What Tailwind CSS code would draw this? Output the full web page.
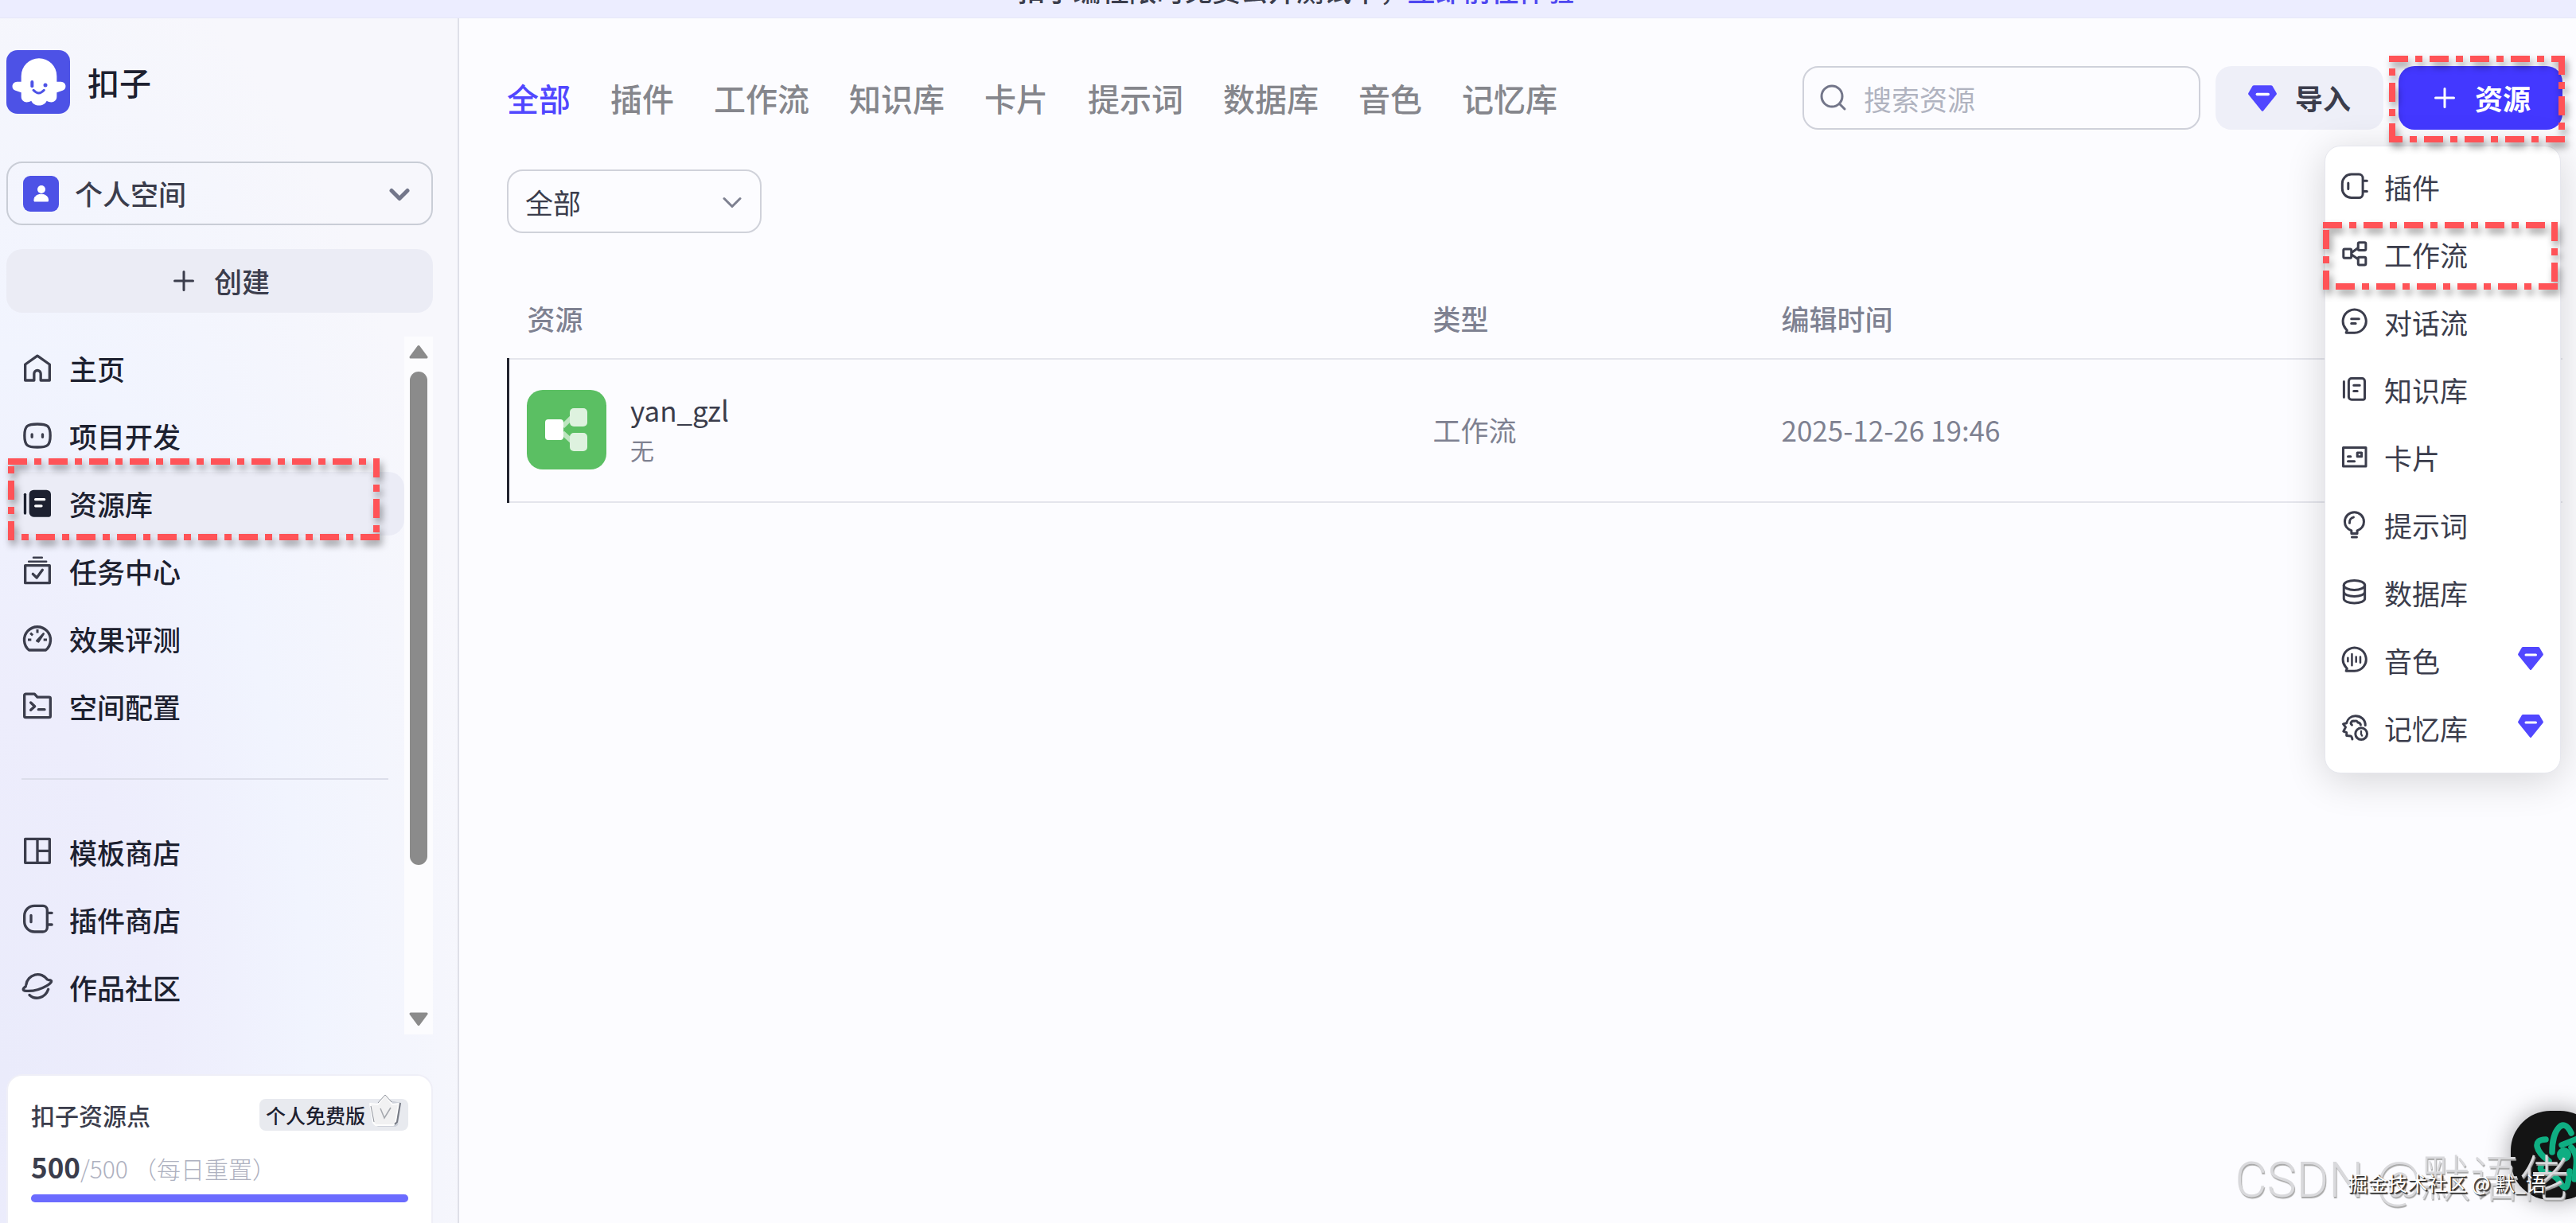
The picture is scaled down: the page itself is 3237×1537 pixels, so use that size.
<!DOCTYPE html>
<html lang="zh-CN">
<head>
  <meta charset="UTF-8" />
  <meta name="viewport" content="width=device-width, initial-scale=1.0" />
  <title>扣子 - 资源库</title>
  <script src="https://cdn.jsdelivr.net/npm/@tailwindcss/browser@4"></script>
</head>
<body class="relative h-screen overflow-hidden flex flex-col bg-[#fcfcff] font-['Noto_Sans_CJK_SC',sans-serif] text-[35px] leading-[50px] text-[#3b3d4c]">

  <!-- Shared icons -->
  <svg class="hidden" aria-hidden="true">
    <symbol id="i-plugin" viewBox="0 0 24 24">
      <path d="M9.8 1.4h6.4a3.2 3.2 0 0 1 3.2 3.2v13.2a3.2 3.2 0 0 1-3.2 3.2H9.8a7.6 7.6 0 0 1-7.6-7.6V9a7.6 7.6 0 0 1 7.6-7.6zM7.2 8.6v5M19.6 6.8h3.3M19.6 15.6h3.3" />
    </symbol>
    <symbol id="i-gem" viewBox="0 0 32 29">
      <path d="M6.5 0h19a2 2 0 0 1 1.6.8l4.5 7.6a2 2 0 0 1-.1 2.2L17 28.4a1.3 1.3 0 0 1-2 0L.5 10.6a2 2 0 0 1-.1-2.2L4.900.8A2 2 0 0 1 6.500 0z" fill="#5147ff" />
      <path d="M10 10h12.500" stroke="#fff" stroke-width="3" stroke-linecap="round" />
    </symbol>
    <symbol id="i-plus" viewBox="0 0 36 36">
      <path d="M18 6.500v23M6.500 18h23" stroke-width="3" stroke-linecap="round" />
    </symbol>
    <symbol id="i-bubble" viewBox="0 0 24 24">
      <path d="M5.400 20.800h7.100a9.700 9.700 0 1 0-7.500-3.500l1.200 1.500z" />
    </symbol>
  </svg>

  <!-- Notice bar -->
  <div class="h-[23px] shrink-0 overflow-hidden flex items-end justify-center bg-[#ecedff] border-b border-[#e6e7f8] pl-5 pb-2.5 font-medium">
    <p class="whitespace-nowrap">扣子编程限时免费公开测试中，<a href="#" class="text-[#4e47f0]">立即前往体验</a></p>
  </div>

  <div class="flex flex-1 min-h-0">

    <!-- Sidebar -->
    <aside class="w-[577px] shrink-0 flex flex-col border-r-2 border-[#dfe0e8] bg-[radial-gradient(ellipse_at_0%_88%,#eaebfb_0%,#ededfc_25%,#f1f4fe_48%,#f7f7fc_78%)] pt-10 pl-2 pr-[31px]">
      <a href="#" class="flex items-center gap-[22px] text-[40px] font-medium text-[#1d2130]">
        <svg class="size-20" viewBox="0 0 240 240" aria-hidden="true">
          <rect width="240" height="240" rx="42" fill="#4d52e6" />
          <path fill="#fff" d="M56 119V98a67 67 0 0 1 134 0v21h16c20 0 24 27 6 33l-22 8v15c0 22-22 26-38 16-8 23-50 23-58 0-16 10-38 6-38-16v-15l-22-8c-18-6-14-33 6-33z" />
          <rect x="91" y="114" width="12" height="28" rx="6" fill="#4d52e6" />
          <circle cx="147" cy="132" r="7.500" fill="#4d52e6" />
          <path d="M102 151q20 22 40 0" fill="none" stroke="#4d52e6" stroke-width="9" stroke-linecap="round" />
        </svg>
        <span>扣子</span>
      </a>

      <div class="relative mt-[60px]">
        <label for="space" class="sr-only">空间</label>
        <select id="space" class="w-full h-20 appearance-none rounded-[20px] border-2 border-[#c9cdd6] bg-transparent pl-[84px] font-medium">
          <option>个人空间</option>
        </select>
        <svg class="absolute left-[21px] top-[18px] size-[45px] pointer-events-none" viewBox="0 0 45 45" aria-hidden="true">
          <rect width="45" height="45" rx="9" fill="#4d52e6" />
          <circle cx="23" cy="17" r="5" fill="#fff" />
          <path d="M14 32v-2c0-9 17.500-9 17.500 0v2z" fill="#fff" stroke="#fff" stroke-linejoin="round" />
        </svg>
        <svg class="absolute right-[27px] top-[29px] size-[30px] pointer-events-none" viewBox="0 0 30 30" fill="none" stroke="#73768a" stroke-width="5" stroke-linecap="round" stroke-linejoin="round" aria-hidden="true">
          <path d="m5 7.500 10 10 10-10" />
        </svg>
      </div>

      <button type="button" class="mt-[30px] h-20 shrink-0 rounded-[20px] bg-[#ebecf5] flex items-center justify-center gap-5 font-medium">
        <svg class="size-9" stroke="currentColor" aria-hidden="true"><use href="#i-plus" /></svg>
        创建
      </button>

      <div class="mt-[30px] h-[877px] shrink-0 flex">
        <nav class="flex-1 font-medium text-[#1d2130]">
          <ul class="space-y-[5px]">
            <li>
              <a href="#" class="h-20 flex items-center gap-5 pl-[19px]">
                <svg class="size-10" viewBox="0 0 24 24" fill="none" stroke="#3b3d4c" stroke-width="2" stroke-linejoin="round" aria-hidden="true"><path d="M2.800 9 12 2.500 21.200 9v12h-6.700v-5a2.500 2.500 0 0 0-5 0v5H2.800z" /></svg>
                主页
              </a>
            </li>
            <li>
              <a href="#" class="h-20 flex items-center gap-5 pl-[19px]">
                <svg class="size-10" viewBox="0 0 24 24" fill="none" stroke="#3b3d4c" stroke-width="2" stroke-linecap="round" aria-hidden="true"><path d="M12 3c7.500 0 9.700 1.200 9.700 8.700s-2.200 8.700-9.700 8.700-9.700-1.200-9.700-8.700S4.500 3 12 3zM7.900 10.800v2M15.900 10.800v2" /></svg>
                项目开发
              </a>
            </li>
            <li class="relative">
              <a href="#" aria-current="page" class="h-20 flex items-center gap-5 pl-[19px] rounded-[20px] bg-[#ebecf6]">
                <svg class="size-10" viewBox="0 0 24 24" aria-hidden="true">
                  <path d="M2.700 5v14.200" stroke="#1d2130" stroke-width="2" stroke-linecap="round" />
                  <path d="M9.200 1.600h9.600a3.400 3.400 0 0 1 3.400 3.400v15.600a1.400 1.400 0 0 1-1.400 1.400H9.200a3.400 3.400 0 0 1-3.400-3.400V5a3.400 3.400 0 0 1 3.400-3.400z" fill="#1d2130" />
                  <path d="M10.600 8.800h6.600M10.600 13.700h4.400" stroke="#fff" stroke-width="2" stroke-linecap="round" />
                </svg>
                资源库
              </a>
              <!-- Dash-dot callout frame -->
              <svg class="absolute left-[2px] -top-[17px] w-[467px] h-[103px] overflow-visible pointer-events-none drop-shadow-[3px_6px_5px_rgba(0,0,0,0.4)]" viewBox="0 0 467 103" fill="none" stroke="#ff5357" stroke-width="8" stroke-dasharray="24 9 9 9" aria-hidden="true">
                <path d="M0 4h467M463 0v103M467 99H0M4 103V0" />
              </svg>
            </li>
            <li>
              <a href="#" class="h-20 flex items-center gap-5 pl-[19px]">
                <svg class="size-10" viewBox="0 0 24 24" fill="none" stroke="#3b3d4c" stroke-width="2" stroke-linecap="round" stroke-linejoin="round" aria-hidden="true"><path d="M2.800 7.600h18.400v13.200H2.800z" /><path d="m8.600 14 2.900 2.800 4.300-5.800" /><path d="M9 1.700h6.500M5.500 4.600h13.200" stroke-width="1.500" /></svg>
                任务中心
              </a>
            </li>
            <li>
              <a href="#" class="h-20 flex items-center gap-5 pl-[19px]">
                <svg class="size-10" viewBox="0 0 24 24" fill="none" stroke="#3b3d4c" stroke-width="2" stroke-linejoin="round" aria-hidden="true"><path d="M5.700 20.400a9.900 9.900 0 1 1 12.600 0z" /><path d="M12 4.800v2.700M4.800 12.600h2.600M16.600 12.600h2.600M6.700 7.600l1.800 1.600" stroke-width="1.800" /><path d="m11.600 13.400 5-5.300-3.800 5.900z" stroke-width="1.600" fill="#3b3d4c" /></svg>
                效果评测
              </a>
            </li>
            <li>
              <a href="#" class="h-20 flex items-center gap-5 pl-[19px]">
                <svg class="size-10" viewBox="0 0 24 24" fill="none" stroke="#3b3d4c" stroke-width="2" stroke-linecap="round" stroke-linejoin="round" aria-hidden="true"><path d="M3.200 2.500h6.600l2.200 2.400h8.800a1 1 0 0 1 1 1v13.300a1 1 0 0 1-1 1H3.200a1 1 0 0 1-1-1V3.500a1 1 0 0 1 1-1zM7 9l3 2.800-3 2.800M12.800 14.200h4.600" /></svg>
                空间配置
              </a>
            </li>
          </ul>
          <hr class="mt-[50px] mb-[51px] ml-[19px] mr-5 border-t-2 border-[#dcdeea]" />
          <ul class="space-y-[5px]">
            <li>
              <a href="#" class="h-20 flex items-center gap-5 pl-[19px]">
                <svg class="size-10" viewBox="0 0 24 24" fill="none" stroke="#3b3d4c" stroke-width="2" stroke-linejoin="round" aria-hidden="true"><path d="M2.800 2h18.400v18H2.800zM12 2v18M12 11h9" /></svg>
                模板商店
              </a>
            </li>
            <li>
              <a href="#" class="h-20 flex items-center gap-5 pl-[19px]">
                <svg class="size-10" fill="none" stroke="#3b3d4c" stroke-width="2" stroke-linecap="round" aria-hidden="true"><use href="#i-plugin" /></svg>
                插件商店
              </a>
            </li>
            <li>
              <a href="#" class="h-20 flex items-center gap-5 pl-[19px]">
                <svg class="size-10" viewBox="0 0 24 24" fill="none" stroke="#3b3d4c" stroke-width="2" stroke-linecap="round" aria-hidden="true"><path d="M3.500 10a8.800 8.800 0 0 1 16-4M6 17.700c4.500 4.200 12 2.300 14.200-4.300M3.200 11.200c-2.500 1.900-2.600 3.200.4 3.400 4.700.3 11-1.300 15.400-3.900 3.900-2.300 4.900-4.300 1.600-4.300" /></svg>
                作品社区
              </a>
            </li>
          </ul>
        </nav>
        <!-- Scroll track -->
        <div class="w-9 bg-[#fcfcfe] flex flex-col items-center py-2.5 text-[#8b8b8b]" aria-hidden="true">
          <svg class="w-6 h-[18px]" viewBox="0 0 24 18"><path d="M12 2.500 22 16H2z" fill="currentColor" stroke="currentColor" stroke-width="3" stroke-linejoin="round" /></svg>
          <div class="mt-4 h-[620px] w-[22px] rounded-full bg-[#8b8b8b]"></div>
          <svg class="mt-auto w-6 h-[18px]" viewBox="0 0 24 18"><path d="M12 15.500 22 2H2z" fill="currentColor" stroke="currentColor" stroke-width="3" stroke-linejoin="round" /></svg>
        </div>
      </div>

      <!-- Credits card -->
      <section class="mt-[50px] flex-1 shrink-0 rounded-t-[20px] border-2 border-b-0 border-[#efeff7] bg-white px-[29px] pt-6">
        <div class="flex items-center justify-between text-[30px]">
          <h2 class="font-medium">扣子资源点</h2>
          <span class="h-10 flex items-center gap-1 rounded-lg bg-[#e8eaef] pl-2 pr-1.5 text-[25px] font-medium text-[#1d2130]">
            个人免费版
            <svg class="w-[44px] h-[44px] mb-2.5 overflow-visible" viewBox="0 0 44 44" aria-hidden="true">
              <path d="M6 16 22 8l19 4-4 28-3 2H12l-4-3z" fill="#cdd1da" />
              <path d="M2 13 12 14 21 2l9 12 8-1-4 24-3 3H9l-3-3z" fill="#f1f1f2" stroke="#fdfdfd" stroke-width="2" stroke-linejoin="round" />
              <path d="m12 12 9-10 8 9M3 16l4 20" fill="none" stroke="#8f939c" />
              <path d="m40 12-4 24-3 3" fill="none" stroke="#777b85" stroke-width="2" />
              <path d="m15 19 5 12 8-13" fill="none" stroke="#a5a8ae" stroke-width="1.500" />
            </svg>
          </span>
        </div>
        <p class="mt-[15px] flex items-baseline text-[30px] font-light text-[#aeb1bf]">
          <strong class="text-[35px] font-bold text-[#3b3d4c]">500</strong>/500<span class="ml-1.5">（每日重置）</span>
        </p>
        <div class="mt-2 h-2.5 rounded-full bg-[#e8e8f5]">
          <div class="h-full rounded-full bg-[#6b6bff]" style="width: 100%"></div>
        </div>
      </section>
    </aside>

    <!-- Main -->
    <main class="flex-1 min-w-0 pt-[60px] pl-[60px] pr-[17px]">
      <div class="flex items-center">
        <nav class="flex gap-[50px] text-[40px] font-medium text-[#85868c] whitespace-nowrap">
          <a href="#" aria-current="page" class="text-[#5147ff]">全部</a>
          <a href="#">插件</a>
          <a href="#">工作流</a>
          <a href="#">知识库</a>
          <a href="#">卡片</a>
          <a href="#">提示词</a>
          <a href="#">数据库</a>
          <a href="#">音色</a>
          <a href="#">记忆库</a>
        </nav>

        <div class="ml-auto flex gap-[19px]">
          <div class="relative">
            <label for="search" class="sr-only">搜索资源</label>
            <input id="search" type="search" placeholder="搜索资源" class="w-[500px] h-20 rounded-[20px] border-2 border-[#cfd1da] bg-transparent pl-[75px] pr-6 placeholder:text-[#b0b3c0]" />
            <svg class="absolute left-[21px] top-[21px] size-9 pointer-events-none" viewBox="0 0 36 36" fill="none" stroke="#73768a" stroke-width="3" stroke-linecap="round" aria-hidden="true">
              <circle cx="16" cy="17" r="13" /><path d="m25.500 26.500 6.500 6.500" />
            </svg>
          </div>
          <button type="button" class="h-20 rounded-[20px] bg-[#eeeff8] px-[41px] flex items-center gap-[23px] font-bold whitespace-nowrap">
            <svg class="w-9 h-[33px]" aria-hidden="true"><use href="#i-gem" /></svg>
            导入
          </button>
          <div class="relative">
            <button type="button" aria-haspopup="menu" aria-expanded="true" class="h-20 rounded-[20px] bg-[#4338ff] px-10 flex items-center gap-5 font-bold text-white whitespace-nowrap">
              <svg class="size-9" stroke="currentColor" aria-hidden="true"><use href="#i-plus" /></svg>
              资源
            </button>

            <!-- Resource menu -->
            <ul role="menu" class="absolute right-0.5 top-[100px] z-10 w-[297px] rounded-[20px] border border-[#e6e7ee] bg-white pt-2 pb-3.5 shadow-[0_8px_50px_rgba(0,0,0,0.16)]">
              <li role="none">
                <button type="button" role="menuitem" class="w-full h-[85px] flex items-center gap-5 pl-[18px] pr-[21px]">
                  <svg class="size-9" fill="none" stroke="currentColor" stroke-width="2" stroke-linecap="round" aria-hidden="true"><use href="#i-plugin" /></svg>
                  插件
                </button>
              </li>
              <li role="none" class="relative">
                <button type="button" role="menuitem" class="w-full h-[85px] flex items-center gap-5 pl-[18px] pr-[21px]">
                  <svg class="size-9" viewBox="0 0 24 24" fill="none" stroke="currentColor" stroke-width="2" stroke-linejoin="round" aria-hidden="true"><rect x="3.200" y="7.300" width="6.600" height="7.600" rx="1" /><rect x="15.500" y="1.800" width="6.400" height="6.600" rx="1" /><rect x="15.500" y="14.100" width="6.400" height="6.600" rx="1" /><path d="m9.800 10.500 5.700-4.200M9.800 11.800l5.700 4" /></svg>
                  工作流
                </button>
                <svg class="absolute -left-[3px] top-0.5 w-[295px] h-[85px] overflow-visible pointer-events-none drop-shadow-[3px_6px_5px_rgba(0,0,0,0.4)]" viewBox="0 0 295 85" fill="none" stroke="#ff5357" stroke-width="8" stroke-dasharray="24 9 9 9" aria-hidden="true">
                  <path d="M0 4h295M291 0v85M295 81H0M4 85V0" />
                </svg>
              </li>
              <li role="none">
                <button type="button" role="menuitem" class="w-full h-[85px] flex items-center gap-5 pl-[18px] pr-[21px]">
                  <svg class="size-9" viewBox="0 0 24 24" fill="none" stroke="currentColor" stroke-width="2" stroke-linecap="round" stroke-linejoin="round" aria-hidden="true"><use href="#i-bubble" /><path d="M9.800 9.200h6.400M9.800 13h3.600" /></svg>
                  对话流
                </button>
              </li>
              <li role="none">
                <button type="button" role="menuitem" class="w-full h-[85px] flex items-center gap-5 pl-[18px] pr-[21px]">
                  <svg class="size-9" viewBox="0 0 24 24" fill="none" stroke="currentColor" stroke-width="2" stroke-linecap="round" stroke-linejoin="round" aria-hidden="true"><path d="M3.600 5v13.200M10 2.400h8.800a2.200 2.200 0 0 1 2.200 2.200v14.400a1.200 1.200 0 0 1-1.200 1.200H10a2.400 2.400 0 0 1-2.400-2.400V4.800A2.400 2.400 0 0 1 10 2.400zM11.800 8.200h5M11.800 13h3" /></svg>
                  知识库
                </button>
              </li>
              <li role="none">
                <button type="button" role="menuitem" class="w-full h-[85px] flex items-center gap-5 pl-[18px] pr-[21px]">
                  <svg class="size-9" viewBox="0 0 24 24" fill="none" stroke="currentColor" stroke-width="2" stroke-linecap="round" stroke-linejoin="round" aria-hidden="true"><path d="M3 3.600h19v15.700H3zM14.800 8h3.600v3.200h-3.600zM7 11.200h2.200M7 15.200h5.400" /></svg>
                  卡片
                </button>
              </li>
              <li role="none">
                <button type="button" role="menuitem" class="w-full h-[85px] flex items-center gap-5 pl-[18px] pr-[21px]">
                  <svg class="size-9" viewBox="0 0 24 24" fill="none" stroke="currentColor" stroke-width="2" stroke-linecap="round" stroke-linejoin="round" aria-hidden="true"><path d="M9.900 19v-2.400c-2.600-1.100-5.600-3.500-5.600-7.500a8 8 0 0 1 16 0c0 4-3 6.400-5.600 7.500V19zM8.300 10.200c-.2-2.500 1.200-4.400 3.300-4.800M10.300 22h4" /></svg>
                  提示词
                </button>
              </li>
              <li role="none">
                <button type="button" role="menuitem" class="w-full h-[85px] flex items-center gap-5 pl-[18px] pr-[21px]">
                  <svg class="size-9" viewBox="0 0 24 24" fill="none" stroke="currentColor" stroke-width="2" stroke-linecap="round" aria-hidden="true"><ellipse cx="12.300" cy="5.600" rx="8.800" ry="4" /><path d="M3.500 5.600v11.200c0 2.200 3.900 3.800 8.800 3.800s8.800-1.600 8.800-3.800V5.600M3.500 11.200c0 2.200 3.900 3.800 8.800 3.800s8.800-1.600 8.800-3.800" /></svg>
                  数据库
                </button>
              </li>
              <li role="none">
                <button type="button" role="menuitem" class="w-full h-[85px] flex items-center gap-5 pl-[18px] pr-[21px]">
                  <svg class="size-9" viewBox="0 0 24 24" fill="none" stroke="currentColor" stroke-width="2" stroke-linecap="round" stroke-linejoin="round" aria-hidden="true"><use href="#i-bubble" /><path d="M6.900 9.800v3M10.300 6.700v9.400M13.800 9v4.200M17.300 9v4.800" stroke-width="1.700" /></svg>
                  音色
                  <svg class="ml-auto mb-1 w-8 h-[29px]" aria-hidden="true"><use href="#i-gem" /></svg>
                </button>
              </li>
              <li role="none">
                <button type="button" role="menuitem" class="w-full h-[85px] flex items-center gap-5 pl-[18px] pr-[21px]">
                  <svg class="size-9" viewBox="0 0 24 24" fill="none" stroke="currentColor" stroke-width="2" stroke-linecap="round" stroke-linejoin="round" aria-hidden="true"><path d="M21.500 9.600C21.500 4.800 17.800 1.900 13.200 1.900 9.400 1.900 6.600 4.300 5.800 7.800L3 8.600l2 2.600-1.800 3.600 2.600 1v2.600l3.200.2c1.200.3 1.400 1.200 1.600 2.700" /><path d="M10.300 9.400C8.400 8 10 5.600 12.200 6.200c1.400-.6 2.800 0 3 1.200 1.400.1 2.200.8 2.400 1.900" /><circle cx="18.100" cy="16.800" r="4.900" /><path d="M18 14.600v2.500l.8 1.300" stroke-width="1.500" /></svg>
                  记忆库
                  <svg class="ml-auto mb-1 w-8 h-[29px]" aria-hidden="true"><use href="#i-gem" /></svg>
                </button>
              </li>
            </ul>

            <svg class="absolute -left-3 -top-[13px] z-20 w-[221px] h-[109px] overflow-visible pointer-events-none drop-shadow-[3px_6px_5px_rgba(0,0,0,0.4)]" viewBox="0 0 221 109" fill="none" stroke="#ff5357" stroke-width="8" stroke-dasharray="24 9 9 9" aria-hidden="true">
              <path d="M0 4h221M217 0v109M221 105H0M4 109V0" />
            </svg>
          </div>
        </div>
      </div>

      <div class="relative mt-[50px] w-80">
        <label for="filter" class="sr-only">筛选</label>
        <select id="filter" class="w-full h-20 appearance-none rounded-[20px] border-2 border-[#d0d2da] bg-transparent pl-[21px] pt-0.5">
          <option>全部</option>
        </select>
        <svg class="absolute right-[22px] top-[27px] size-[30px] pointer-events-none" viewBox="0 0 30 30" fill="none" stroke="#7e8191" stroke-width="3" stroke-linecap="round" stroke-linejoin="round" aria-hidden="true">
          <path d="m5 9.500 10 10 10-10" />
        </svg>
      </div>

      <table class="mt-[60px] w-full table-fixed text-left text-[#7e8191]">
        <thead>
          <tr class="h-[98px] border-b-2 border-[#e4e5ec]">
            <th class="w-[1138px] pl-6 pb-1 font-medium">资源</th>
            <th class="w-[437px] pl-6 pb-1 font-medium">类型</th>
            <th class="pl-[25px] pb-1 font-medium">编辑时间</th>
          </tr>
        </thead>
        <tbody>
          <tr class="h-[180px] border-b-2 border-[#e4e5ec]">
            <td class="border-l-3 border-l-[#22242f] pl-[22px] pb-0.5">
              <div class="flex items-center gap-[30px]">
                <svg class="size-[100px]" viewBox="0 0 100 100" aria-hidden="true">
                  <rect width="100" height="100" rx="20" fill="#5bbf63" />
                  <path d="M45 46 57 34M45 54l12 11" stroke="#fff" stroke-opacity=".6" stroke-width="6" />
                  <rect x="54" y="23" width="22" height="23" rx="5" fill="#def2df" />
                  <rect x="54" y="54" width="22" height="23" rx="5" fill="#def2df" />
                  <rect x="23" y="37" width="23" height="26" rx="4" fill="#fff" />
                </svg>
                <div>
                  <p class="text-[#3b3d4c]">yan_gzl</p>
                  <p class="text-[30px]">无</p>
                </div>
              </div>
            </td>
            <td class="pl-6 pb-0.5">工作流</td>
            <td class="pl-[25px] pb-0.5">2025-12-26 19:46</td>
          </tr>
        </tbody>
      </table>
    </main>
  </div>

  <!-- Floating assistant, half off the right edge -->
  <button type="button" aria-label="AI 助手" class="absolute -right-[30px] bottom-[29px] w-28 h-28 rounded-[50px] bg-[#141414] shadow-[0_0_30px_rgba(0,0,0,0.35)]">
    <svg class="size-28" viewBox="0 0 112 112" fill="none" stroke="#0fae82" stroke-width="7.500" stroke-linecap="round" stroke-linejoin="round" aria-hidden="true">
      <path d="M52 52c0-28 14-46 24-24M64 43l20-8M44 36c-18 0-12 16 4 27M38 70c-4 10 14 4 24 20s10-2 12-14" />
      <circle cx="67" cy="55" r="9" fill="#0fae82" stroke="none" />
      <path d="M76 46c10 10 6 24 4 40" />
    </svg>
  </button>

  <!-- Watermarks -->
  <p class="absolute right-[9px] bottom-[24px] font-[Roboto,'Noto_Sans_CJK_SC',sans-serif] text-[62px] leading-[60px] font-light text-[#d9d9dc] whitespace-nowrap pointer-events-none [text-shadow:1px_2px_1px_#a8a8a8]">CSDN @默语佬</p>
  <p class="absolute right-[38px] bottom-[26px] text-[25px] text-white whitespace-nowrap pointer-events-none [text-shadow:1px_1px_1px_#222,2px_2px_1px_#444]">掘金技术社区 @ 默_语</p>
</body>
</html>
